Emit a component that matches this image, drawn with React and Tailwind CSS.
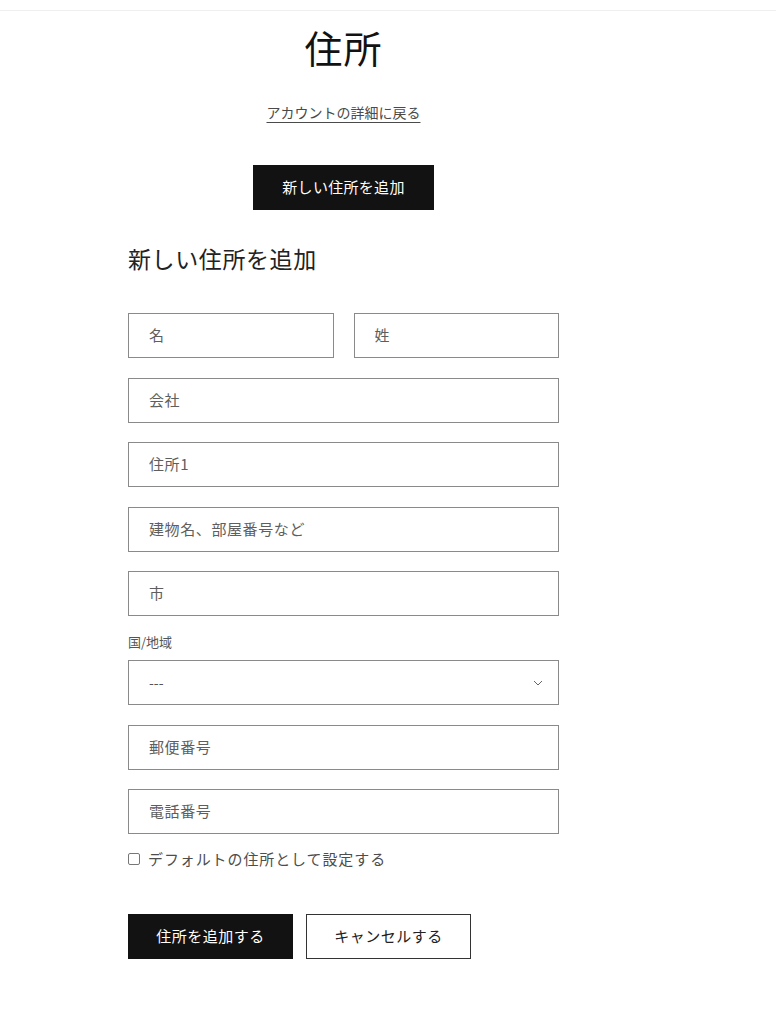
export default function App() {
  const font = { fontFamily: '"Noto Sans CJK JP", "Noto Sans", sans-serif' };
  const Field = ({ label, className = "" }) => (
    <div className={`h-[45px] border border-[#8a8a8a] flex items-center pl-[20px] text-[15px] tracking-[0.6px] text-[#5e5e5e] ${className}`}>
      {label}
    </div>
  );
  return (
    <div className="min-h-[1024px] bg-white text-[#121212]" style={font}>
      <div className="h-[11px] border-b border-[#efefef]" />
      <div className="ml-[128px] w-[431px] flex flex-col">
        <h1 className="mt-[10px] text-center text-[38px] leading-[52px] font-normal text-[#121212] tracking-[1px]">住所</h1>
        <div className="mt-[28px] text-center leading-[20px]">
          <a className="text-[14px] text-[#4a4a4a] underline underline-offset-[4px] decoration-[#4a4a4a]">アカウントの詳細に戻る</a>
        </div>
        <div className="mt-[43px] flex justify-center">
          <button className="h-[45px] w-[181px] bg-[#121212] text-white text-[15px] tracking-[0.3px]">新しい住所を追加</button>
        </div>
        <h2 className="mt-[32px] text-[23px] leading-[32px] tracking-[0.6px] text-[#222] font-normal">新しい住所を追加</h2>
        <div className="mt-[39px] flex flex-col gap-[19.5px]">
          <div className="flex gap-[20px]">
            <Field label="名" className="flex-1" />
            <Field label="姓" className="flex-1" />
          </div>
          <Field label="会社" />
          <Field label="住所1" />
          <Field label="建物名、部屋番号など" />
          <Field label="市" />
        </div>
        <div className="mt-[15.5px] text-[13px] leading-[20px] text-[#555]">国/地域</div>
        <div className="mt-[8.5px] h-[45px] border border-[#8a8a8a] flex items-center justify-between pl-[20px] pr-[15px] text-[14px] text-[#555]">
          <span>---</span>
          <svg width="10" height="6" viewBox="0 0 10 6" fill="none">
            <path d="M1 1l4 4 4-4" stroke="#666" strokeWidth="1" />
          </svg>
        </div>
        <div className="mt-[19.5px] flex flex-col gap-[19.5px]">
          <Field label="郵便番号" />
          <Field label="電話番号" />
        </div>
        <div className="mt-[15px] h-[20px] flex items-center gap-[8px] text-[15px] tracking-[0.9px] text-[#4d4d4d]">
          <span className="w-[12px] h-[12px] border border-[#777] rounded-[2px] bg-white" />
          <span>デフォルトの住所として設定する</span>
        </div>
        <div className="mt-[45px] flex gap-[13px]">
          <button className="h-[45px] w-[165px] bg-[#121212] text-white text-[15px] tracking-[0.5px]">住所を追加する</button>
          <button className="h-[45px] w-[165px] border border-[#333] bg-white text-[#222] text-[15px] tracking-[0.5px]">キャンセルする</button>
        </div>
      </div>
    </div>
  );
}
